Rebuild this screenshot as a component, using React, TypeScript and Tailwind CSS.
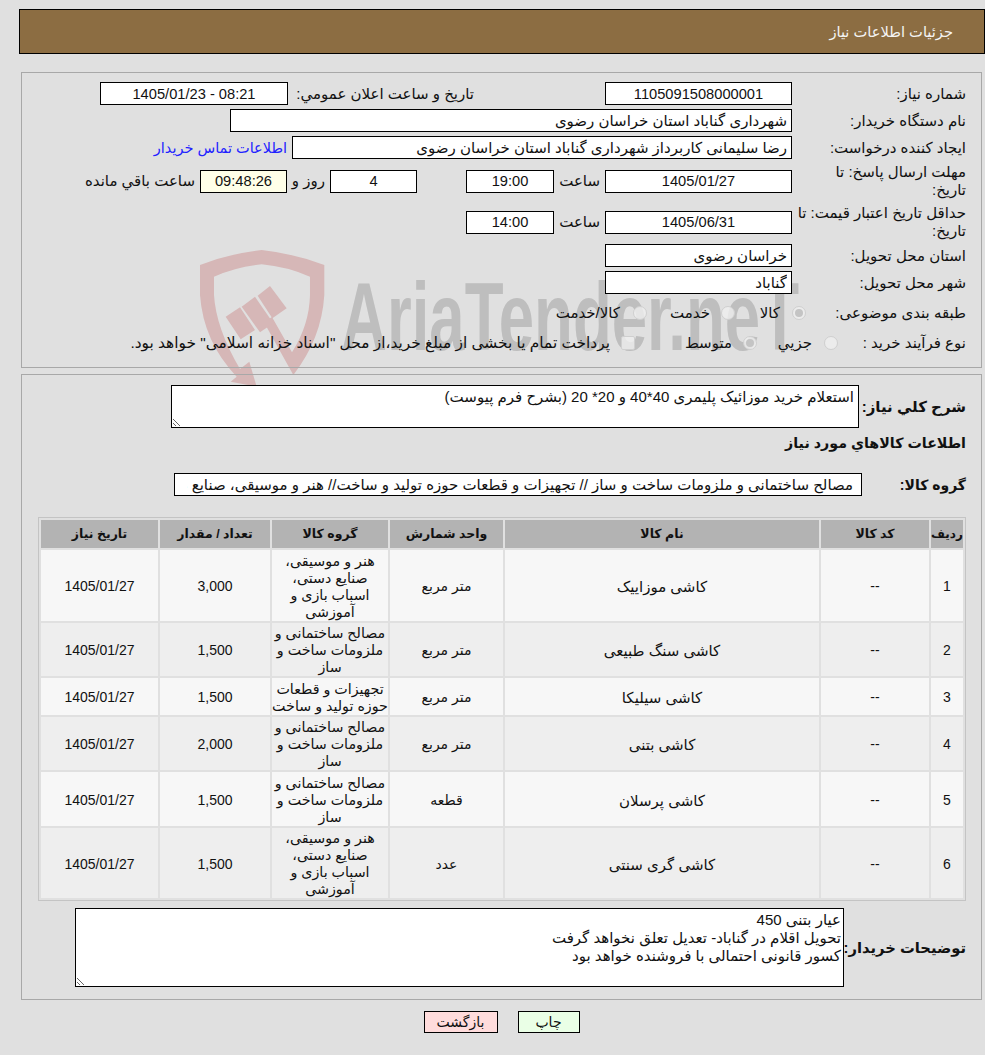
import React from 'react';

const box = 'h-[23px] border border-black bg-white px-1 text-[#111] outline-none';
const boxNum = box + ' text-center text-[14.67px]';

type Item = { code: string; name: string; unit: string; group: string[]; qty: string; date: string; h: string };

const items: Item[] = [
  { code: '--', name: 'کاشی موزاییک', unit: 'متر مربع', group: ['هنر و موسیقی،', 'صنایع دستی،', 'اسباب بازی و', 'آموزشی'], qty: '3,000', date: '1405/01/27', h: 'h-[71px]' },
  { code: '--', name: 'کاشی سنگ طبیعی', unit: 'متر مربع', group: ['مصالح ساختمانی و', 'ملزومات ساخت و', 'ساز'], qty: '1,500', date: '1405/01/27', h: 'h-[53px]' },
  { code: '--', name: 'کاشی سیلیکا', unit: 'متر مربع', group: ['تجهیزات و قطعات', 'حوزه تولید و ساخت'], qty: '1,500', date: '1405/01/27', h: 'h-[37px]' },
  { code: '--', name: 'کاشی بتنی', unit: 'متر مربع', group: ['مصالح ساختمانی و', 'ملزومات ساخت و', 'ساز'], qty: '2,000', date: '1405/01/27', h: 'h-[53px]' },
  { code: '--', name: 'کاشی پرسلان', unit: 'قطعه', group: ['مصالح ساختمانی و', 'ملزومات ساخت و', 'ساز'], qty: '1,500', date: '1405/01/27', h: 'h-[54px]' },
  { code: '--', name: 'کاشی گری سنتی', unit: 'عدد', group: ['هنر و موسیقی،', 'صنایع دستی،', 'اسباب بازی و', 'آموزشی'], qty: '1,500', date: '1405/01/27', h: 'h-[70px]' },
];

function Radio({ on }: { on?: boolean }) {
  return (
    <span className="flex h-[14px] w-[14px] shrink-0 items-center justify-center rounded-full border border-[#cfcfcf] bg-[#efefef]/80">
      {on && <span className="h-[8px] w-[8px] rounded-full bg-[#c4c4c4]" />}
    </span>
  );
}

function Watermark() {
  return (
    <div className="absolute left-0 top-0 h-[440px] w-[985px]">
      <svg width="985" height="440" viewBox="0 0 985 440" className="block">
        <g transform="translate(190 245) scale(0.3333)" fill="#d6b7b7">
          <path d="M30 60 Q120 25 215 15 Q310 25 403 60 V150 Q395 280 310 390 L222 232 L246 216 L306 322 Q358 240 360 150 V95 Q290 65 215 58 Q140 65 72 95 V150 Q78 250 150 372 L178 350 L200 425 L122 410 L140 395 Q40 290 30 150 Z" />
          <path d="M107 215 L150 187 L195 255 L152 283 Z" />
          <path d="M155 185 L195 155 L250 235 L210 262 Z" />
          <path d="M203 152 L240 123 L290 190 L247 220 Z" />
        </g>
        <text x="341" y="350" fontFamily="Liberation Sans" fontWeight="700" fontSize="96" fill="#bebebe" textLength="458" lengthAdjust="spacingAndGlyphs" direction="ltr">
          AriaTender.neT
        </text>
      </svg>
    </div>
  );
}

export default function App() {
  return (
    <div dir="rtl" className="relative min-h-[1055px] overflow-hidden bg-[#e0e0e0] pt-[9px] text-[15px] leading-[18px] text-[#111]" style={{ fontFamily: '"Liberation Sans", "DejaVu Sans", sans-serif' }}>
      <Watermark />

      <div className="relative mr-0 ml-[19px] flex h-[45px] items-center border border-black bg-[#8c6d42] pr-[31px] text-[14.67px] text-[#f4f4f4]">
        جزئیات اطلاعات نیاز
      </div>

      {/* اطلاعات اصلی */}
      <section className="relative mr-[3px] ml-[21px] mt-[18px] h-[296px] border border-[#a8a8a8] pr-[15px] pt-[9px]">
        <div className="flex h-[23px] items-center">
          <div className="w-[174px] shrink-0">شماره نیاز:</div>
          <input readOnly value="1105091508000001" className={boxNum + ' w-[187px]'} />
          <div className="mr-[131px] w-[186px] shrink-0 whitespace-nowrap">تاریخ و ساعت اعلان عمومي:</div>
          <input readOnly value="1405/01/23 - 08:21" dir="ltr" className={boxNum + ' w-[188px]'} />
        </div>
        <div className="mt-[4px] flex h-[23px] items-center">
          <div className="w-[174px] shrink-0">نام دستگاه خریدار:</div>
          <input readOnly value="شهرداری گناباد استان خراسان رضوی" className={box + ' w-[562px]'} />
        </div>
        <div className="mt-[4px] flex h-[23px] items-center">
          <div className="w-[174px] shrink-0">ایجاد کننده درخواست:</div>
          <input readOnly value="رضا سلیمانی کاربرداز شهرداری گناباد استان خراسان رضوی" className={box + ' w-[500px]'} />
          <a href="#" className="mr-[5px] whitespace-nowrap text-[14.5px] text-[#2222ff]">اطلاعات تماس خریدار</a>
        </div>
        <div className="mt-[2px] flex h-[40px] items-center">
          <div className="w-[174px] shrink-0">مهلت ارسال پاسخ: تا<br />تاریخ:</div>
          <input readOnly value="1405/01/27" className={boxNum + ' w-[187px]'} />
          <div className="mr-[5px] w-[46px] shrink-0">ساعت</div>
          <input readOnly value="19:00" className={boxNum + ' w-[88px]'} />
          <input readOnly value="4" className={boxNum + ' mr-[49px] w-[87px]'} />
          <div className="mr-[5px] w-[38px] shrink-0">روز و</div>
          <input readOnly value="09:48:26" className="h-[23px] w-[87px] border border-black bg-[#ffffe8] text-center text-[14.67px] outline-none" />
          <div className="mr-[5px] whitespace-nowrap">ساعت باقي مانده</div>
        </div>
        <div className="flex h-[42px] items-center">
          <div className="w-[174px] shrink-0">حداقل تاریخ اعتبار قیمت: تا<br />تاریخ:</div>
          <input readOnly value="1405/06/31" className={boxNum + ' w-[187px]'} />
          <div className="mr-[5px] w-[46px] shrink-0">ساعت</div>
          <input readOnly value="14:00" className={boxNum + ' w-[88px]'} />
        </div>
        <div className="mt-[1px] flex h-[23px] items-center">
          <div className="w-[174px] shrink-0">استان محل تحویل:</div>
          <input readOnly value="خراسان رضوی" className={box + ' w-[187px]'} />
        </div>
        <div className="mt-[4px] flex h-[23px] items-center">
          <div className="w-[174px] shrink-0">شهر محل تحویل:</div>
          <input readOnly value="گناباد" className={box + ' w-[187px]'} />
        </div>
        <div className="mt-[4px] flex h-[30px] items-center">
          <div className="w-[160px] shrink-0">طبقه بندی موضوعی:</div>
          <Radio on />
          <div className="mr-[12px] w-[45px] shrink-0">کالا</div>
          <Radio />
          <div className="mr-[11px] w-[63px] shrink-0">خدمت</div>
          <Radio />
          <div className="mr-[13px] whitespace-nowrap">کالا/خدمت</div>
        </div>
        <div className="flex h-[30px] items-center">
          <div className="w-[128px] shrink-0">نوع فرآیند خرید :</div>
          <Radio />
          <div className="mr-[12px] w-[55px] shrink-0">جزيي</div>
          <Radio on />
          <div className="mr-[11px] w-[97px] shrink-0">متوسط</div>
          <span className="h-[14px] w-[14px] shrink-0 rounded-[2px] border border-[#cfcfcf] bg-[#efefef]/80" />
          <div className="mr-[11px] whitespace-nowrap text-[15.4px]">پرداخت تمام یا بخشی از مبلغ خرید،از محل "اسناد خزانه اسلامی" خواهد بود.</div>
        </div>
      </section>

      {/* شرح و اقلام */}
      <section className="relative mr-[3px] ml-[21px] mt-[6px] h-[626px] border border-[#a8a8a8] pr-[15px] pt-[10px]">
        <div className="flex h-[43px] items-center">
          <div className="w-[107px] shrink-0 font-bold">شرح كلي نياز:</div>
          <textarea readOnly defaultValue="استعلام خرید موزائیک پلیمری 40*40 و 20* 20 (بشرح فرم پیوست)" className="h-[43px] w-[688px] resize border border-black bg-white px-1 pb-0 pt-[2px] outline-none" />
        </div>
        <div className="flex h-[30px] items-center text-[14.25px] font-bold">اطلاعات کالاهاي مورد نياز</div>
        <div className="mt-[15px] flex h-[23px] items-center">
          <div className="w-[104px] shrink-0 text-[14px] font-bold">گروه کالا:</div>
          <input readOnly value="مصالح ساختمانی و ملزومات ساخت و ساز // تجهیزات و قطعات حوزه تولید و ساخت// هنر و موسیقی، صنایع دستی، اسباب بازی و آموزشی" className="h-[23px] w-[688px] border border-black bg-white pl-[12px] pr-2 outline-none" />
        </div>

        <table className="mt-[21px] w-[928px] table-fixed border-separate border-spacing-[2px] border border-[#c4c4c4] text-center text-[14px] leading-[17px]">
          <thead>
            <tr className="h-[28px] bg-[#b3b3b3] text-[12.5px] font-bold">
              <th className="w-[32px] p-0 text-[12px]">ردیف</th>
              <th className="w-[108px] p-0">کد کالا</th>
              <th className="w-[314px] p-0">نام کالا</th>
              <th className="w-[113px] p-0">واحد شمارش</th>
              <th className="w-[116px] p-0">گروه کالا</th>
              <th className="w-[110px] p-0">تعداد / مقدار</th>
              <th className="w-[117px] p-0">تاریخ نیاز</th>
            </tr>
          </thead>
          <tbody>
            {items.map((it, i) => (
              <tr key={i} className={it.h + ' ' + (i % 2 === 0 ? 'bg-[#f7f7f7]' : 'bg-[#eeeeee]')}>
                <td className="p-0 pt-[2px]">{i + 1}</td>
                <td className="p-0 pt-[2px]">{it.code}</td>
                <td className="p-0 pt-[2px] text-[15px]">{it.name}</td>
                <td className="p-0 pt-[2px]">{it.unit}</td>
                <td className="p-0 pt-[2px] text-[14.25px]">
                  {it.group.map((line) => (
                    <div key={line} className="whitespace-nowrap">{line}</div>
                  ))}
                </td>
                <td className="p-0 pt-[2px]">{it.qty}</td>
                <td className="p-0 pt-[2px]">{it.date}</td>
              </tr>
            ))}
          </tbody>
        </table>

        <div className="mt-[7px] flex h-[79px] items-center">
          <div className="w-[122px] shrink-0 whitespace-nowrap text-[14.75px] font-bold">توضیحات خریدار:</div>
          <textarea
            readOnly
            defaultValue={'عیار بتنی 450\nتحویل اقلام در گناباد- تعدیل تعلق نخواهد گرفت\nکسور قانونی احتمالی با فروشنده خواهد بود'}
            className="h-[79px] w-[769px] resize border border-black bg-white px-[2px] pb-0 pt-[2px] outline-none"
          />
        </div>
      </section>

      <div className="relative mt-[11px] flex h-[22px] justify-center gap-[20px] pl-[18px]">
        <button className="w-[62px] border border-black bg-[#eaffe6] text-[14px]">چاپ</button>
        <button className="w-[74px] border border-black bg-[#ffdcdc] text-[14px]">بازگشت</button>
      </div>
    </div>
  );
}
